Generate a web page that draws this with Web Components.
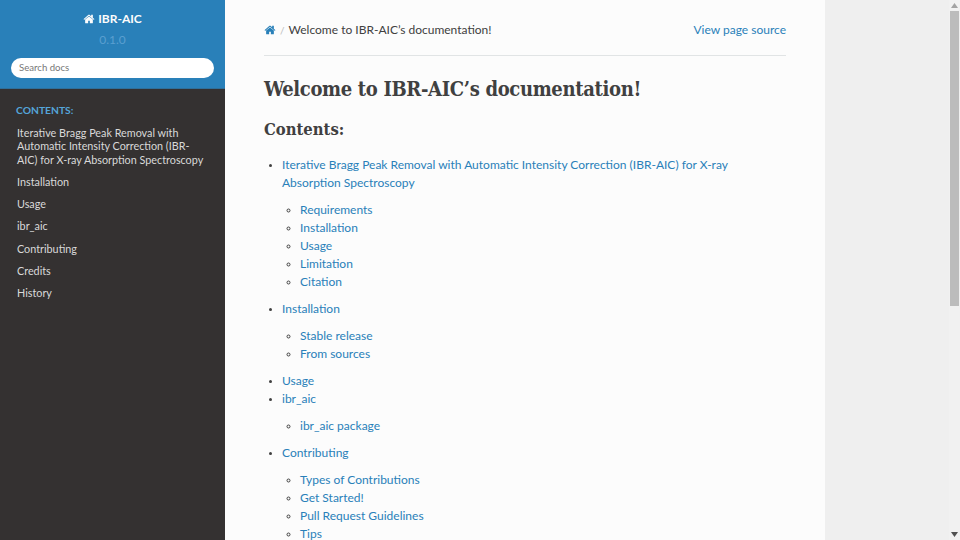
<!DOCTYPE html>
<html lang="en">
<head>
<meta charset="utf-8">
<title>IBR-AIC documentation</title>
<style>
  html, body { margin: 0; height: 100%; overflow: hidden; }
  body { font-family: Lato, "Liberation Sans", sans-serif; background: #efefef; }
</style>
</head>
<body>
<docs-page></docs-page>

<script>
const HOME = `<svg viewBox="0 0 1792 1792" width="12" height="12" fill="currentColor"><path d="M1472 992v480q0 26-19 45t-45 19h-384v-384h-256v384h-384q-26 0-45-19t-19-45v-480q0-1 .5-3t.5-3l575-474 575 474q1 2 1 6zm223-69l-62 74q-8 9-21 11h-3q-13 0-21-7l-692-577-692 577q-12 8-24 7-13-2-21-11l-62-74q-8-10-7-23.500t11-21.500l719-599q32-26 76-26t76 26l244 204v-195q0-14 9-23t23-9h192q14 0 23 9t9 23v408l219 182q10 8 11 21.500t-7 23.500z"/></svg>`;

class DocsSidebar extends HTMLElement {
  constructor() {
    super();
    this.attachShadow({ mode: "open" });
  }
  connectedCallback() {
    const items = ["Installation", "Usage", "ibr_aic", "Contributing", "Credits", "History"];
    this.shadowRoot.innerHTML = `
      <style>
        :host { display: flex; flex-direction: column; width: 225px; flex: none; background: #343131; color: #d9d9d9; }
        .head { background: #2980b9; height: 88.500px; box-sizing: border-box; padding-top: 11px; text-align: center; border-bottom: 1px solid #2f6f9a; }
        .title { color: #fcfcfc; font-weight: 700; font-size: 12px; line-height: 16px; display: flex; justify-content: center; align-items: center; gap: 3px; }
        .version { color: #5a9fd0; font-size: 12px; line-height: 16px; margin-top: 5px; }
        .search { margin: 10px 11px 0; height: 20px; border-radius: 10px; background: #fff; color: #777; font-size: 9.6px; line-height: 19px; text-align: left; padding-left: 8px; }
        .caption { color: #55a5d9; font-weight: 700; font-size: 10.3px; line-height: 14px; margin: 14px 16px 0; text-transform: uppercase; }
        ul { list-style: none; margin: 5px 0 0; padding: 0; }
        li { padding: 4.35px 17px; line-height: 13.5px; font-size: 10.8px; }
      </style>
      <div class="head">
        <div class="title">${HOME}<span>IBR-AIC</span></div>
        <div class="version">0.1.0</div>
        <div class="search">Search docs</div>
      </div>
      <div class="caption">Contents:</div>
      <ul>
        <li>Iterative Bragg Peak Removal with Automatic Intensity Correction (IBR-AIC) for X-ray Absorption Spectroscopy</li>
        ${items.map((t) => `<li>${t}</li>`).join("")}
      </ul>
    `;
  }
}

class TocList extends HTMLElement {
  constructor() {
    super();
    this.attachShadow({ mode: "open" });
  }
  connectedCallback() {
    const toc = [
      ["Iterative Bragg Peak Removal with Automatic Intensity Correction (IBR-AIC) for X-ray Absorption Spectroscopy", ["Requirements", "Installation", "Usage", "Limitation", "Citation"]],
      ["Installation", ["Stable release", "From sources"]],
      ["Usage", []],
      ["ibr_aic", ["ibr_aic package"]],
      ["Contributing", ["Types of Contributions", "Get Started!", "Pull Request Guidelines", "Tips"]],
    ];
    const row = ([label, kids]) => `<li><a>${label}</a>${kids.length ? `<ul class="sub">${kids.map((k) => `<li><a>${k}</a></li>`).join("")}</ul>` : ""}</li>`;
    this.shadowRoot.innerHTML = `
      <style>
        :host { display: block; font-size: 12px; line-height: 18px; }
        ul { margin: 0; padding: 0 0 0 18px; list-style: disc; color: #404040; }
        ul.sub { list-style: circle; margin: 9px 0; }
        li::marker { font-size: 9px; }
        a { color: #2980b9; }
      </style>
      <ul>${toc.map(row).join("")}</ul>
    `;
  }
}

class DocsMain extends HTMLElement {
  constructor() {
    super();
    this.attachShadow({ mode: "open" });
  }
  connectedCallback() {
    this.shadowRoot.innerHTML = `
      <style>
        :host { display: block; width: 600px; flex: none; box-sizing: border-box; background: #fcfcfc; padding: 19px 39px 0; color: #404040; overflow: hidden; }
        .crumbs { display: flex; align-items: center; font-size: 12px; line-height: 20px; padding-top: 1px; padding-bottom: 15px; border-bottom: 1px solid #e1e4e5; }
        .crumbs svg { color: #2980b9; display: block; margin-left: -0.5px; }
        .sep { color: #bbb; margin: 0 4px 0 4.500px; font-size: 10px; }
        .source { margin-left: auto; color: #2980b9; }
        h1, h2 { font-family: "DejaVu Serif", "Liberation Serif", serif; font-stretch: condensed; font-weight: 700; margin: 0; color: #404040; }
        h1 { font-size: 20px; line-height: 28px; margin-top: 19px; letter-spacing: -0.34px; }
        h2 { font-size: 16.500px; line-height: 24px; margin-top: 15px; margin-bottom: 14px; }
      </style>
      <nav class="crumbs">${HOME}<span class="sep">/</span><span>Welcome to IBR-AIC’s documentation!</span><span class="source">View page source</span></nav>
      <h1>Welcome to IBR-AIC’s documentation!</h1>
      <h2>Contents:</h2>
      <toc-list></toc-list>
    `;
  }
}

class PageScrollbar extends HTMLElement {
  constructor() {
    super();
    this.attachShadow({ mode: "open" });
  }
  connectedCallback() {
    this.shadowRoot.innerHTML = `
      <style>
        :host { display: flex; flex-direction: column; align-items: center; width: 11px; flex: none; background: #f1f1f1; }
        .arrow { height: 11px; flex: none; display: flex; align-items: center; justify-content: center; }
        .thumb { width: 9px; height: 295px; flex: none; background: #bcbcbc; }
        .rest { flex: 1; }
        svg { display: block; }
      </style>
      <div class="arrow"><svg width="7" height="5"><path d="M3.500 0L7 5H0z" fill="#a3a3a3"/></svg></div>
      <div class="thumb"></div>
      <div class="rest"></div>
      <div class="arrow"><svg width="7" height="5"><path d="M0 0H7L3.500 5z" fill="#505050"/></svg></div>
    `;
  }
}

class DocsPage extends HTMLElement {
  constructor() {
    super();
    this.attachShadow({ mode: "open" });
  }
  connectedCallback() {
    this.shadowRoot.innerHTML = `
      <style>
        :host { display: flex; height: 540px; width: 960px; overflow: hidden; background: #efefef; }
        .gap { flex: 1; }
      </style>
      <docs-sidebar></docs-sidebar>
      <docs-main></docs-main>
      <div class="gap"></div>
      <page-scrollbar></page-scrollbar>
    `;
  }
}

customElements.define("docs-sidebar", DocsSidebar);
customElements.define("toc-list", TocList);
customElements.define("docs-main", DocsMain);
customElements.define("page-scrollbar", PageScrollbar);
customElements.define("docs-page", DocsPage);
</script>
</body>
</html>
